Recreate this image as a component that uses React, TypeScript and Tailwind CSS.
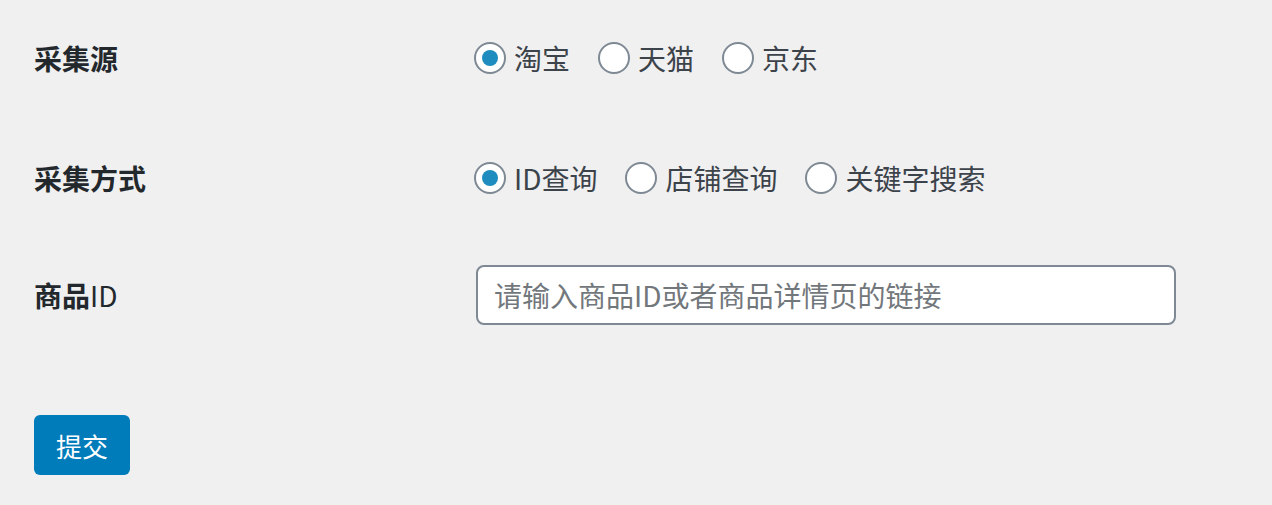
import { useState } from "react";

const font = '"Noto Sans CJK SC", "Noto Sans", sans-serif';

function RadioGroup({ options, value, onChange }: { options: string[]; value: string; onChange: (v: string) => void }) {
  return (
    <div className="flex items-center">
      {options.map((opt) => (
        <label key={opt} className="flex items-center mr-[28px] cursor-pointer" onClick={() => onChange(opt)}>
          <span className="w-[32px] h-[32px] rounded-full border-2 border-[#7e8993] bg-white flex items-center justify-center">
            {value === opt && <span className="w-[16px] h-[16px] rounded-full bg-[#1e8cbe]" />}
          </span>
          <span className="ml-[8px] text-[28px] leading-[40px] text-[#3c434a]">{opt}</span>
        </label>
      ))}
    </div>
  );
}

export default function App() {
  const [source, setSource] = useState("淘宝");
  const [mode, setMode] = useState("ID查询");
  const [productId, setProductId] = useState("");

  return (
    <div className="min-h-screen w-full bg-[#f0f0f1] pl-[34px]" style={{ fontFamily: font }}>
      {/* Form table */}
      <div className="flex items-center h-[116px]">
        <div className="w-[440px] text-[28px] font-bold text-[#23282d]">采集源</div>
        <RadioGroup options={["淘宝", "天猫", "京东"]} value={source} onChange={setSource} />
      </div>

      <div className="flex items-center h-[124px]">
        <div className="w-[440px] text-[28px] font-bold text-[#23282d]">采集方式</div>
        <RadioGroup options={["ID查询", "店铺查询", "关键字搜索"]} value={mode} onChange={setMode} />
      </div>

      <div className="flex items-center h-[110px]">
        <div className="w-[440px] text-[28px] font-bold text-[#23282d]">
          商品<span className="font-normal">ID</span>
        </div>
        <input
          type="text"
          value={productId}
          onChange={(e) => setProductId(e.target.value)}
          placeholder="请输入商品ID或者商品详情页的链接"
          className="ml-[2px] w-[700px] h-[60px] px-[16px] bg-white border-2 border-[#7e8993] rounded-[8px] text-[28px] text-[#32373c] placeholder:text-[#72777c] outline-none"
        />
      </div>

      {/* Submit */}
      <div className="pt-[65px]">
        <button className="h-[60px] px-[22px] bg-[#007cba] text-white text-[26px] rounded-[6px]">提交</button>
      </div>
    </div>
  );
}
